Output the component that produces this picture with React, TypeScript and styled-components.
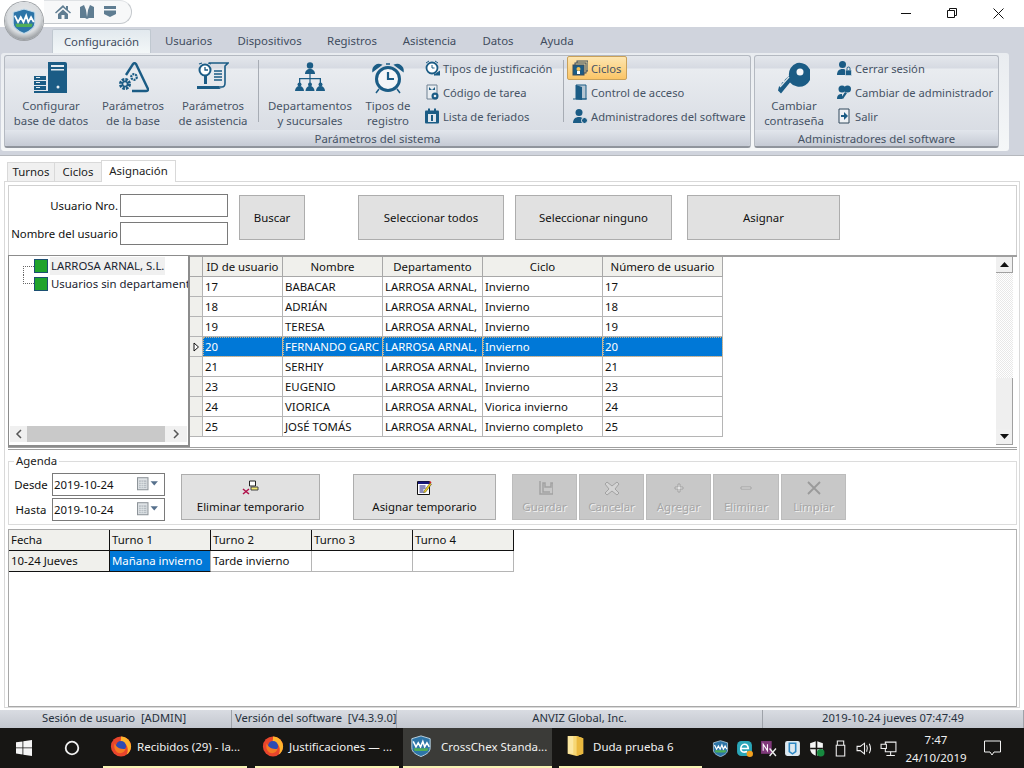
import React from 'react'
import styled, { createGlobalStyle } from 'styled-components'

const GlobalStyle = createGlobalStyle`
  html, body { margin: 0; padding: 0; background: #fff; }
  body { font-family: "Noto Sans", "Open Sans", sans-serif; font-size: 11.4px; color: #111; overflow: hidden; }
  * { box-sizing: border-box; }
`

const INK = '#1b5c85'

const Window = styled.div`
  width: 1024px;
  height: 768px;
  display: flex;
  flex-direction: column;
  position: relative;
  overflow: hidden;
`

/* title bar */
const TitleBar = styled.div`
  height: 27px;
  display: flex;
  background: #fff;
`
const QuickAccess = styled.div`
  margin-left: 44px;
  width: 88px;
  height: 24px;
  border: 1px solid #c4c8cc;
  border-left: none;
  border-top-color: #dfe2e5;
  border-radius: 0 12px 12px 0;
  display: flex;
  align-items: center;
  gap: 8px;
  padding: 0 0 0 11px;
  background: #f7f8f9;
`
const WindowControls = styled.div`
  margin-left: auto;
  display: flex;
  padding-right: 3px;
  color: #111;
`
const WindowButton = styled.div`
  width: 46px;
  height: 26px;
  display: flex;
  align-items: center;
  justify-content: center;
`
const LogoBadge = styled.div`
  position: absolute;
  left: 5px;
  top: 2px;
  width: 38px;
  height: 38px;
  border-radius: 50%;
  background: radial-gradient(circle at 50% 40%, #e8eaec 0, #d9dcdf 55%, #8b8f93 80%, #55585b 100%);
  box-shadow: 0 0 0 1px #9da1a5;
  display: flex;
  align-items: center;
  justify-content: center;
  z-index: 2;
`

/* ribbon */
const TabStrip = styled.div`
  height: 26px;
  background: #d0d4dd;
  display: flex;
  padding-left: 52px;
`
const RibbonTab = styled.div<{ $active?: boolean; $w: number }>`
  width: ${p => p.$w}px;
  height: ${p => (p.$active ? 24 : 23)}px;
  margin-top: 2px;
  display: flex;
  align-items: center;
  justify-content: center;
  color: #3f4c5e;
  border-radius: 2px 2px 0 0;
  ${p => p.$active && `
    background: linear-gradient(#e2e9ee, #f3f7f8);
    border: 1px solid #c0c8d0;
    border-bottom: none;
  `}
`
const RibbonBand = styled.div`
  height: 102px;
  background: #d0d4dd;
  flex: none;
`
const RibbonBody = styled.div`
  width: 1008px;
  height: 98px;
  margin-left: 1px;
  background: linear-gradient(#e9ecf0, #f5f7f8);
  border-radius: 3px;
  padding: 2px 3px 0;
  display: flex;
  gap: 3px;
`
const RibbonGroup = styled.div<{ $w: number }>`
  width: ${p => p.$w}px;
  height: 93px;
  border: 1px solid #b4b9c1;
  border-bottom: 2px solid #8f949c;
  border-radius: 3px;
  display: flex;
  flex-direction: column;
  background: linear-gradient(#e4e7ec 0, #d6dae2 12px, #e9ecf0 13px, #d9dde4 74px);
`
const GroupContent = styled.div`
  height: 74px;
  display: flex;
`
const GroupCaption = styled.div`
  flex: 1;
  background: linear-gradient(#e2e6ec, #c5cad4);
  display: flex;
  align-items: center;
  justify-content: center;
  color: #465365;
  border-radius: 0 0 3px 3px;
`
const LargeButton = styled.div<{ $w: number }>`
  width: ${p => p.$w}px;
  display: flex;
  flex-direction: column;
  align-items: center;
  color: #465365;
  line-height: 15px;
  text-align: center;
  padding-top: 6px;
  flex: none;
`
const LargeIcon = styled.div`
  height: 36px;
  display: flex;
  align-items: flex-start;
  justify-content: center;
`
const RibbonDivider = styled.div<{ $ml: number; $mr: number }>`
  width: 1px;
  height: 62px;
  margin: 4px ${p => p.$mr}px 0 ${p => p.$ml}px;
  background: #a7acb4;
  flex: none;
`
const SmallColumn = styled.div<{ $w: number; $pad: number }>`
  width: ${p => p.$w}px;
  flex: none;
  display: flex;
  flex-direction: column;
  padding: 0 0 0 ${p => p.$pad}px;
`
const SmallButton = styled.div<{ $on?: boolean }>`
  height: 24px;
  display: flex;
  align-items: center;
  gap: 3px;
  color: #465365;
  font-size: 11.2px;
  white-space: nowrap;
  border-radius: 2px;
  ${p => p.$on && `
    background: linear-gradient(#fde6b0, #fbc566);
    border: 1px solid #c9a15a;
    margin-left: -5px;
    padding-left: 4px;
    width: 60px;
  `}
`

/* main area */
const Main = styled.div`
  flex: 1;
  min-height: 0;
  background: #fff;
  border-top: 1px solid #b5b8bd;
  padding: 4px 4px 2px;
  display: flex;
  flex-direction: column;
`
const PageTabs = styled.div`
  display: flex;
  height: 22px;
  align-items: flex-end;
  padding-left: 4px;
  flex: none;
  position: relative;
  z-index: 1;
  margin-bottom: -1px;
`
const PageTab = styled.div<{ $active?: boolean; $w: number }>`
  width: ${p => p.$w}px;
  height: ${p => (p.$active ? 22 : 20)}px;
  padding-bottom: ${p => (p.$active ? 3 : 1)}px;
  background: ${p => (p.$active ? '#fff' : '#f0f0f0')};
  border: 1px solid #d9d9d9;
  border-bottom: ${p => (p.$active ? 'none' : '1px solid #d9d9d9')};
  margin-left: -1px;
  display: flex;
  align-items: center;
  justify-content: center;
  color: #222;
`
const PagePanel = styled.div`
  flex: 1;
  min-height: 0;
  border: 1px solid #d9d9d9;
  padding: 3px 2px 0 3px;
  display: flex;
  flex-direction: column;
`
const FilterBar = styled.div`
  height: 70px;
  flex: none;
  border: 1px solid #d0d0d0;
  border-bottom: none;
  display: flex;
  padding-top: 8px;
`
const FilterFields = styled.div`
  width: 219px;
  display: grid;
  grid-template-columns: 109px 108px;
  grid-auto-rows: 23px;
  row-gap: 5px;
  column-gap: 2px;
  flex: none;
`
const FieldLabel = styled.label`
  text-align: right;
  align-self: center;
  white-space: nowrap;
`
const TextField = styled.div`
  border: 1px solid #7a7a7a;
  background: #fff;
`
const ActionButton = styled.div<{ $w: number; $ml: number }>`
  width: ${p => p.$w}px;
  margin: 1px 0 0 ${p => p.$ml}px;
  height: 45px;
  background: #e1e1e1;
  border: 1px solid #adadad;
  display: flex;
  align-items: center;
  justify-content: center;
  flex: none;
`
const SplitRow = styled.div`
  height: 195px;
  flex: none;
  display: flex;
  border-bottom: 3px double #a0a0a0;
`
const TreePanel = styled.div`
  width: 182px;
  height: 192px;
  border: 1px solid #8c8c8c;
  border-width: 1px 2px 2px 1px;
  display: flex;
  flex-direction: column;
  flex: none;
  background: #fff;
`
const TreeList = styled.div`
  flex: 1;
  overflow: hidden;
  padding: 1px 0 0 14px;
`
const TreeRow = styled.div`
  height: 18px;
  display: flex;
  align-items: center;
  white-space: nowrap;
`
const TreeLine = styled.span<{ $last?: boolean }>`
  width: 11px;
  height: 9px;
  flex: none;
  border-left: 1px dotted #666;
  ${p => p.$last
    ? 'border-bottom: 1px dotted #666; margin-top: -9px;'
    : 'border-top: 1px dotted #666; margin-top: 9px;'}
`
const TreeSquare = styled.span`
  width: 14px;
  height: 14px;
  background: #1fa32c;
  border: 1px solid #1b4f72;
  flex: none;
  margin-right: 2px;
`
const TreeLabel = styled.span<{ $on?: boolean }>`
  padding: 0 1px;
  line-height: 18px;
  background: ${p => (p.$on ? '#f0f0f0' : 'transparent')};
  color: #1a2430;
`
const HScroll = styled.div`
  height: 16px;
  margin: 0 1px 3px;
  display: flex;
  align-items: center;
  background: #f0f0f0;
  color: #555;
`
const HThumb = styled.div`
  flex: 1;
  height: 16px;
  background: #c9c9c9;
`
const ScrollArrow = styled.div<{ $w: number }>`
  width: ${p => p.$w}px;
  display: flex;
  align-items: center;
  justify-content: center;
`
const GridArea = styled.div`
  flex: 1;
  border-top: 2px solid #9f9f9f;
  display: flex;
  background: #fff;
  height: 192px;
  padding-right: 4px;
`
const GridBody = styled.div`
  flex: 1;
`
const GridLine = styled.div`
  display: grid;
  grid-template-columns: 13px 80px 100px 100px 120px 120px;
  width: 533px;
  height: 20px;
`
const HeadCell = styled.div`
  background: #f0f0ec;
  border-right: 1px solid #a8a8a8;
  border-bottom: 1px solid #a8a8a8;
  display: flex;
  align-items: center;
  justify-content: center;
  white-space: nowrap;
  overflow: hidden;
`
const RowMark = styled.div`
  background: #f0f0ec;
  border-right: 1px solid #b5b5b5;
  border-bottom: 1px solid #b5b5b5;
  display: flex;
  align-items: center;
  justify-content: center;
`
const DataCell = styled.div<{ $on?: boolean }>`
  background: ${p => (p.$on ? '#0078d7' : '#fff')};
  color: ${p => (p.$on ? '#fff' : '#111')};
  border-right: 1px solid #b5b5b5;
  border-bottom: 1px solid #b5b5b5;
  padding-left: 2px;
  line-height: 19px;
  white-space: nowrap;
  overflow: hidden;
  ${p => p.$on && 'outline: 1px dotted #c9b48a; outline-offset: -1px;'}
`
const VScroll = styled.div`
  width: 17px;
  height: 188px;
  display: flex;
  flex-direction: column;
  flex: none;
`
const VArrow = styled.div`
  height: 16px;
  flex: none;
  display: flex;
  align-items: center;
  justify-content: center;
  background: #f0f0f0;
  border-right: 1px solid #a0a0a0;
  border-bottom: 1px solid #a0a0a0;
`
const VTrack = styled.div`
  flex: 1;
  background: repeating-conic-gradient(#e8e8e8 0 25%, #fff 0 50%) 0 0 / 2px 2px;
`
const VThumb = styled.div`
  height: 51px;
  flex: none;
  background: #efefef;
  border-right: 1px solid #a0a0a0;
`
const AgendaBox = styled.fieldset`
  margin: 4px 0 0;
  padding: 0 0 0 5px;
  height: 71px;
  flex: none;
  border: 1px solid #dcdcdc;
  display: flex;
  min-inline-size: 0;
`
const AgendaLegend = styled.legend`
  padding: 0 2px;
  line-height: 14px;
  color: #222;
`
const AgendaRow = styled.div`
  display: flex;
  margin-top: 5px;
`
const DateFields = styled.div`
  display: grid;
  grid-template-columns: 38px 113px;
  grid-auto-rows: 23px;
  row-gap: 2px;
  flex: none;
  width: 151px;
`
const DateLabel = styled.span`
  align-self: center;
  text-align: center;
  padding-right: 4px;
`
const DateInput = styled.div`
  border: 1px solid #7a7a7a;
  display: flex;
  align-items: center;
  padding: 0 4px 0 1px;
  justify-content: space-between;
`
const CommandButton = styled.div<{ $w: number; $ml?: number; $off?: boolean }>`
  width: ${p => p.$w}px;
  margin: 1px 0 0 ${p => p.$ml || 0}px;
  height: 46px;
  flex: none;
  background: ${p => (p.$off ? '#c8c8c8' : '#e1e1e1')};
  border: 1px solid ${p => (p.$off ? '#bcbcbc' : '#adadad')};
  color: ${p => (p.$off ? '#a6a6a6' : '#111')};
  ${p => p.$off && 'text-shadow: 1px 1px 0 #f2f2f2;'}
  display: flex;
  flex-direction: column;
  align-items: center;
  padding-top: 5px;
  justify-content: space-between;
  padding-bottom: 5px;
  white-space: nowrap;
`
const ScheduleGrid = styled.div`
  flex: 1;
  min-height: 0;
  margin-top: 4px;
  border: 1px solid #a8a8a8;
  border-right-color: #b5b5b5;
`
const ScheduleLine = styled.div`
  display: grid;
  grid-template-columns: repeat(5, 101px);
  width: 505px;
`
const ScheduleHead = styled.div`
  height: 21px;
  background: #f0f0ec;
  border-right: 1px solid #111;
  border-bottom: 1px solid #111;
  padding-left: 2px;
  line-height: 20px;
`
const ScheduleCell = styled.div<{ $kind?: 'date' | 'on' }>`
  height: 21px;
  padding-left: 2px;
  line-height: 20px;
  white-space: nowrap;
  overflow: hidden;
  background: ${p => (p.$kind === 'date' ? '#f0f0ec' : p.$kind === 'on' ? '#0078d7' : '#fff')};
  color: ${p => (p.$kind === 'on' ? '#fff' : '#111')};
  border-bottom: 1px solid ${p => (p.$kind ? '#111' : '#b5b5b5')};
  border-right: 1px solid ${p => (p.$kind === 'date' ? '#111' : '#b5b5b5')};
`

/* status bar */
const StatusBar = styled.div`
  height: 18px;
  flex: none;
  display: flex;
  background: linear-gradient(#d9dce2, #c3c7cf);
  color: #26303c;
  font-size: 11.2px;
`
const StatusCell = styled.div<{ $w: number; $pad?: number; $center?: boolean }>`
  width: ${p => p.$w}px;
  flex: none;
  border-right: 1px solid #9ea2a9;
  line-height: 16px;
  white-space: pre;
  overflow: hidden;
  padding-left: ${p => p.$pad || 0}px;
  text-align: ${p => (p.$center ? 'center' : 'left')};
`

/* taskbar */
const Taskbar = styled.div`
  height: 40px;
  flex: none;
  background: #171614;
  display: flex;
  align-items: stretch;
  color: #f1f1f1;
  font-size: 11.5px;
  padding-right: 13px;
`
const TaskSlot = styled.div`
  width: 48px;
  flex: none;
  display: flex;
  align-items: center;
  justify-content: center;
`
const TaskItem = styled.div<{ $w: number; $ml: number; $gap?: number; $active?: boolean }>`
  width: ${p => p.$w}px;
  margin-left: ${p => p.$ml}px;
  flex: none;
  display: flex;
  align-items: center;
  gap: ${p => p.$gap || 5}px;
  padding: 0 0 2px 7px;
  white-space: nowrap;
  overflow: hidden;
  background: ${p => (p.$active ? '#3b3b38' : 'transparent')};
  border-bottom: 2px solid #f6f3b4;
`
const TrayIcons = styled.div`
  margin-left: auto;
  display: flex;
  align-items: center;
  gap: 7px;
`
const Clock = styled.div`
  width: 74px;
  margin-left: -5px;
  text-align: center;
  line-height: 18px;
  flex: none;
  padding-top: 1px;
`
const NotifyButton = styled.div`
  width: 38px;
  flex: none;
  display: flex;
  align-items: center;
  justify-content: center;
`

/* drawings */
const Shield = ({ size = 24 }: { size?: number }) => (
  <svg width={size} height={size} viewBox="0 0 24 24">
    <path d="M12 1 22 4v10c0 5-5 7.500-10 9.500C7 21.500 2 19 2 14V4z" fill="#2d75a8" stroke="#c3dbea" strokeWidth="1" />
    <path d="M3.500 7 6.500 13 9 8.500 11.500 13 14 7l2 6 2.500-4.500L21 13" fill="none" stroke="#fff" strokeWidth="1.700" />
    <path d="M4 14.500h16l-1 3H5z" fill="#4fae57" />
  </svg>
)
const IconHome = () => (
  <svg width="16" height="16" viewBox="0 0 16 16"><path d="M8 1 0 8.500l1 1L8 3.500l7 6 1-1L13 6V2h-2v2.200zM3 10v5h3.500v-4h3v4H13v-5L8 5.500z" fill="#5f7d92" /></svg>
)
const IconUsers = () => (
  <svg width="16" height="16" viewBox="0 0 16 16"><path d="M1 3 5 1l2 5 1 7 1-7 2-5 4 2v11H10l-2 1-2-1H1z" fill="#5f7d92" /><path d="M6.800 3h2.400L8 8z" fill="#f7f8f9" /></svg>
)
const IconShield = () => (
  <svg width="14" height="14" viewBox="0 0 14 14"><path d="M1 1h12v3H1zM1 5.500h12V9L7 12 1 9z" fill="#5f7d92" /></svg>
)
const IconServer = () => (
  <svg width="34" height="32" viewBox="0 0 34 32">
    <path d="M14 0h17a2 2 0 0 1 2 2v28H14z" fill={INK} />
    <path d="M17 3h13v2H17zM17 7h13v1.500H17z" fill="#e6edf2" />
    <circle cx="24" cy="25" r="1.500" fill="#e6edf2" />
    <path d="M0 14h12v4H0zM0 19h12v4H0zM0 24h12v4H0z" fill={INK} />
    <path d="M2 15.500h4M2 20.500h4M2 25.500h4" stroke="#e6edf2" />
    <path d="M0 29h33v2H0z" fill={INK} />
  </svg>
)
const IconBaseParams = () => (
  <svg width="32" height="32" viewBox="0 0 32 32">
    <path d="M9 13 16 2c1-1 2-1 3 0l12 25c.5 1-.5 2-2 2H15" fill="none" stroke={INK} strokeWidth="2.400" />
    <circle cx="8" cy="22" r="4.500" fill="none" stroke={INK} strokeWidth="3" strokeDasharray="2.500 1" />
    <circle cx="8" cy="22" r="2.500" fill="none" stroke={INK} strokeWidth="1.500" />
    <circle cx="17" cy="15" r="2.800" fill="none" stroke={INK} strokeWidth="2.200" strokeDasharray="2 .8" />
  </svg>
)
const IconAttendance = () => (
  <svg width="32" height="32" viewBox="0 0 32 32">
    <path d="M12 1h19l-3 3v17c0 3-1 4-3 4H12" fill="none" stroke={INK} strokeWidth="1.600" />
    <path d="M17 9h8M17 12h8M17 15h8M17 18h8" stroke={INK} strokeWidth="1.300" />
    <circle cx="8" cy="8" r="5.500" fill="#fff" stroke={INK} strokeWidth="2" />
    <path d="M8 5v3h3M2 2l3-1M14 2l-3-1" stroke={INK} strokeWidth="1.300" fill="none" />
    <path d="M7 13h3v9H7z" fill={INK} />
    <path d="M0 24h22c0 2 1 3 3 3H0z" fill={INK} />
  </svg>
)
const IconOrg = () => (
  <svg width="30" height="30" viewBox="0 0 30 30" fill={INK}>
    <circle cx="15" cy="3.500" r="3.200" />
    <path d="M10 12c0-3 2-5 5-5s5 2 5 5z" />
    <path d="M14.400 12h1.200v5h-1.200zM4 16h22v1.300H4zM4 16h1.300v5H4zM14.400 16h1.200v5h-1.200zM24.700 16H26v5h-1.300z" />
    <circle cx="4.500" cy="22.500" r="2" /><path d="M0 29c0-3 2-5 4.500-5S9 26 9 29z" />
    <circle cx="15" cy="22.500" r="2" /><path d="M10.500 29c0-3 2-5 4.500-5s4.500 2 4.500 5z" />
    <circle cx="25.500" cy="22.500" r="2" /><path d="M21 29c0-3 2-5 4.500-5s4.500 2 4.500 5z" />
  </svg>
)
const IconAlarm = () => (
  <svg width="32" height="32" viewBox="0 0 32 32">
    <circle cx="16" cy="17" r="11.500" fill="#f4f6f8" stroke={INK} strokeWidth="3" />
    <path d="M16 10v7h6" fill="none" stroke={INK} strokeWidth="2.200" />
    <path d="M1 9a6 6 0 0 1 8-6zM31 9a6 6 0 0 0-8-6zM7 27l-3 4M25 27l3 4M14 2h4" fill={INK} stroke={INK} strokeWidth="1.500" />
  </svg>
)
const IconKey = () => (
  <svg width="32" height="34" viewBox="0 0 32 34">
    <path d="M19 1a12 12 0 1 1-7 19.500l-9 11-3-3 1-4 2-1 1-3 2-.5 1-2.500L11 14A12 12 0 0 1 19 1z" fill={INK} />
    <circle cx="22" cy="10" r="3.500" fill="#f4f6f8" />
    <path d="M2 25l9-10" stroke="#dfe6ea" strokeWidth="1.300" />
  </svg>
)
const MiniIcon = ({ kind }: { kind: string }) => {
  const body: Record<string, React.ReactNode> = {
    justify: <><circle cx="8" cy="8" r="5.500" fill="#fff" stroke={INK} strokeWidth="1.800" /><path d="M8 5v3h2.500" stroke={INK} fill="none" /><path d="M2 3l3-2M14 3l-3-2M10 15h6v-4z" stroke={INK} fill={INK} /></>,
    task: <><path d="M3 1h10v14H3z" fill="#e9edf1" stroke="#6f8192" /><path d="M5 3l3 3 3-3v3H5z" fill={INK} /><circle cx="11" cy="12" r="3.500" fill={INK} /><circle cx="11" cy="12" r="1.300" fill="#e9edf1" /></>,
    holiday: <><rect x="1" y="2.500" width="14" height="13" rx="1" fill={INK} /><path d="M4 .5h2v4H4zM10 .5h2v4h-2z" fill={INK} /><rect x="4" y="6" width="8" height="8" fill="#dfe7ee" /><path d="M8 7v6" stroke={INK} strokeWidth="2" /></>,
    cycles: <><rect x="5" y="1" width="11" height="10" fill="#e8d49c" stroke="#3c4c5c" /><rect x="3" y="3" width="11" height="10" fill="#e8d49c" stroke="#3c4c5c" /><rect x="1" y="5" width="11" height="10" fill={INK} stroke="#3c4c5c" /><circle cx="6.500" cy="9" r="2" fill="#f3c25a" /><path d="M5 11h3v3H5z" fill="#fff" /></>,
    door: <><path d="M4 1h10v14H4z" fill="#b4c5d2" stroke={INK} /><path d="M4 1l6 2v13l-6-1z" fill={INK} /><path d="M1 15h14" stroke={INK} /></>,
    admin: <><circle cx="7" cy="4.500" r="3.500" fill={INK} /><path d="M1 15c0-4 2.500-6 6-6 2 0 3 .5 4 1.500V15z" fill={INK} /><circle cx="12.500" cy="12.500" r="3" fill={INK} stroke="#e6eaef" /></>,
    logout: <><circle cx="6.500" cy="4.500" r="3.500" fill={INK} /><path d="M1 15c0-4 2-6 5.500-6 1.500 0 2.500.3 3 1v5z" fill={INK} /><rect x="9.500" y="10" width="6" height="5.500" fill={INK} stroke="#e6eaef" strokeWidth=".6" /><path d="M11 10V8.500a1.500 1.500 0 0 1 3 0V10" fill="none" stroke={INK} /></>,
    change: <><circle cx="6" cy="5" r="3.500" fill={INK} /><path d="M1 15c0-4 2-5 5-5v5z" fill={INK} /><circle cx="11.500" cy="5" r="3.500" fill={INK} /><path d="M9 8l-4 6 2 1 4-6z" fill={INK} /></>,
    exit: <><path d="M3 1h10v14H3z" fill="#eef1f4" stroke="#30485c" /><path d="M8 4v3H5v2h3v3l4-4z" fill={INK} /></>,
  }
  return <svg width="16" height="16" viewBox="0 0 16 16" style={{ flex: 'none' }}>{body[kind]}</svg>
}
const CalendarIcon = () => (
  <svg width="23" height="15" viewBox="0 0 22 14">
    <rect x="0.500" y="0.500" width="10" height="11.500" fill="#dfe3e6" stroke="#8d9499" />
    <path d="M2 3h7v7.500H2z" fill="#b5bcc2" />
    <path d="M2 5h7M2 7h7M2 9h7M4 3v7.500M6 3v7.500" stroke="#e8ebed" strokeWidth=".6" />
    <path d="M13 4h7l-3.500 4z" fill="#56708c" />
  </svg>
)
const ScheduleRemoveIcon = () => (
  <svg width="17" height="15" viewBox="0 0 17 15">
    <path d="M7.500 1h6v5h-6z" fill="#fff" stroke="#222" />
    <path d="M9 7h7v3H9z" fill="#f4ea71" stroke="#444" />
    <path d="M1 9l6 5M7 9l-6 5" stroke="#b0104a" strokeWidth="1.500" />
  </svg>
)
const ScheduleEditIcon = () => (
  <svg width="15" height="15" viewBox="0 0 15 15">
    <path d="M.5 1.500h12v13H.5z" fill="#fff" stroke="#111" />
    <path d="M1 1.500h12v2.500H1z" fill="#16167a" />
    <path d="M2.500 6h6M2.500 8h6M2.500 10h4M2.500 12h4" stroke="#16167a" />
    <path d="M7 11l6-8 1.500 1.200-6 8-2 .5z" fill="#f3d21c" stroke="#333" strokeWidth=".5" />
    <path d="M13 1l1.500 1.200-.8 1.300-1.500-1.200z" fill="#d02020" />
  </svg>
)
const GhostIcon = ({ kind }: { kind: string }) => {
  const d: Record<string, React.ReactNode> = {
    save: <path d="M3 1v13h13V3h-2v4H8V3H6v9h7" fill="none" stroke="#a2a2a2" strokeWidth="1.500" />,
    cancel: <path d="M3 2l5 4 5-4 2 2-4 5 4 4-2 2-5-4-5 4-2-2 4-4-4-5z" fill="#d4d4d4" stroke="#a2a2a2" />,
    add: <path d="M7 4h2v3h3v2H9v3H7V9H4V7h3z" fill="#e6e6e6" stroke="#a2a2a2" />,
    remove: <path d="M3 7h10v2H3z" fill="#e6e6e6" stroke="#a2a2a2" />,
    clear: <path d="M2 2l12 12M14 2 2 14" stroke="#9a9a9a" strokeWidth="1.800" />,
  }
  return <svg width="16" height="16" viewBox="0 0 16 16">{d[kind]}</svg>
}
const Firefox = () => (
  <svg width="22" height="22" viewBox="0 0 24 24">
    <circle cx="12" cy="12.500" r="11" fill="#e8452c" />
    <path d="M12 1.500c6 0 11 5 11 11 0 4-2 7-5 9 3-5 1-11-3-13-1 1-3 1-4 0 1-2 1-5 1-7z" fill="#ffb32c" />
    <circle cx="12" cy="12" r="5.500" fill="#2c4bb4" />
    <path d="M5 9c2 4 5 7 12 6-1 4-5 6-9 4-3-2-4-6-3-10z" fill="#f47a22" />
  </svg>
)
const Folder = () => (
  <svg width="19" height="22" viewBox="0 0 16 20">
    <path d="M1 1h8l6 2v14l-6 2-8-2z" fill="#f7d774" />
    <path d="M1 1h5v16H1z" fill="#fbe7a1" />
    <path d="M9 1l6 2v14l-6 2z" fill="#eab93f" />
  </svg>
)
const Tray = ({ kind }: { kind: string }) => {
  const b: Record<string, React.ReactNode> = {
    onenote: <><rect x="1" y="1" width="10" height="12" fill="#80397b" /><path d="M3 10V4l4 6V4" stroke="#fff" fill="none" /><path d="M9 8l6 7M15 8l-6 7" stroke="#eee" strokeWidth="1.300" /></>,
    edge: <><rect x="1" y="1" width="14" height="14" rx="4" fill="#2aa6b8" /><path d="M4.500 8h7c0-2.500-1.500-4-3.500-4S4.500 6 4.500 8.500 6.500 12 10.500 11" fill="none" stroke="#fff" strokeWidth="1.600" /><circle cx="13" cy="13" r="3" fill="#f2a11f" /></>,
    phone: <><rect x="1" y="1" width="14" height="14" rx="2" fill="#dde9f0" /><path d="M5 3h6v8l-3 2-3-2z" fill="none" stroke="#2d88c4" strokeWidth="1.500" /></>,
    defender: <><path d="M8 1l6 2v5c0 4-3 6-6 7-3-1-6-3-6-7V3z" fill="#f5f5f5" /><path d="M8 1v14M2 8h12" stroke="#171614" strokeWidth="1.500" /><circle cx="12" cy="12" r="3.500" fill="#178a3f" /></>,
    usb: <><path d="M5 1h6v4H5zM4 5h8v10H4z" fill="none" stroke="#f1f1f1" /></>,
    sound: <><path d="M1 6h3l4-3v10l-4-3H1z" fill="none" stroke="#f1f1f1" /><path d="M10 5c1 2 1 4 0 6M12.500 3.500c1.500 3 1.500 6 0 9" fill="none" stroke="#f1f1f1" /></>,
    net: <><path d="M5 2h10v9H5z" fill="none" stroke="#f1f1f1" /><path d="M1 4h5v4H1zM10 11v3M6 14.500h8" fill="#171614" stroke="#f1f1f1" /></>,
  }
  return <svg width="17" height="17" viewBox="0 0 16 16">{b[kind]}</svg>
}

const users = [
  ['17', 'BABACAR', 'Invierno'],
  ['18', 'ADRIÁN', 'Invierno'],
  ['19', 'TERESA', 'Invierno'],
  ['20', 'FERNANDO GARC', 'Invierno'],
  ['21', 'SERHIY', 'Invierno'],
  ['23', 'EUGENIO', 'Invierno'],
  ['24', 'VIORICA', 'Viorica invierno'],
  ['25', 'JOSÉ TOMÁS', 'Invierno completo'],
]

export default function App() {
  return (
    <Window>
      <GlobalStyle />
      <LogoBadge><Shield size={26} /></LogoBadge>
      <TitleBar>
        <QuickAccess><IconHome /><IconUsers /><IconShield /></QuickAccess>
        <WindowControls>
          <WindowButton><svg width="10" height="10" viewBox="0 0 10 10"><path d="M0 5.500h10" stroke="#111" /></svg></WindowButton>
          <WindowButton><svg width="10" height="10" viewBox="0 0 10 10"><path d="M.5 2.500h7v7h-7zM2.500 2.500v-2h7v7h-2" fill="none" stroke="#111" /></svg></WindowButton>
          <WindowButton><svg width="11" height="11" viewBox="0 0 11 11"><path d="M.5.500l10 10M10.500.500l-10 10" stroke="#111" /></svg></WindowButton>
        </WindowControls>
      </TitleBar>

      <TabStrip>
        <RibbonTab $active $w={99}>Configuración</RibbonTab>
        <RibbonTab $w={75}>Usuarios</RibbonTab>
        <RibbonTab $w={87}>Dispositivos</RibbonTab>
        <RibbonTab $w={78}>Registros</RibbonTab>
        <RibbonTab $w={77}>Asistencia</RibbonTab>
        <RibbonTab $w={60}>Datos</RibbonTab>
        <RibbonTab $w={58}>Ayuda</RibbonTab>
      </TabStrip>
      <RibbonBand>
        <RibbonBody>
          <RibbonGroup $w={747}>
            <GroupContent>
              <LargeButton $w={92}><LargeIcon><IconServer /></LargeIcon>Configurar<br />base de datos</LargeButton>
              <LargeButton $w={72}><LargeIcon><IconBaseParams /></LargeIcon>Parámetros<br />de la base</LargeButton>
              <LargeButton $w={88}><LargeIcon><IconAttendance /></LargeIcon>Parámetros<br />de asistencia</LargeButton>
              <RibbonDivider $ml={1} $mr={8} />
              <LargeButton $w={86}><LargeIcon><IconOrg /></LargeIcon>Departamentos<br />y sucursales</LargeButton>
              <LargeButton $w={70}><LargeIcon><IconAlarm /></LargeIcon>Tipos de<br />registro</LargeButton>
              <SmallColumn $w={139} $pad={1}>
                <SmallButton><MiniIcon kind="justify" />Tipos de justificación</SmallButton>
                <SmallButton><MiniIcon kind="task" />Código de tarea</SmallButton>
                <SmallButton><MiniIcon kind="holiday" />Lista de feriados</SmallButton>
              </SmallColumn>
              <RibbonDivider $ml={1} $mr={3} />
              <SmallColumn $w={178} $pad={5}>
                <SmallButton $on><MiniIcon kind="cycles" />Ciclos</SmallButton>
                <SmallButton><MiniIcon kind="door" />Control de acceso</SmallButton>
                <SmallButton><MiniIcon kind="admin" />Administradores del software</SmallButton>
              </SmallColumn>
            </GroupContent>
            <GroupCaption>Parámetros del sistema</GroupCaption>
          </RibbonGroup>
          <RibbonGroup $w={245}>
            <GroupContent>
              <LargeButton $w={78}><LargeIcon><IconKey /></LargeIcon>Cambiar<br />contraseña</LargeButton>
              <SmallColumn $w={165} $pad={3}>
                <SmallButton><MiniIcon kind="logout" />Cerrar sesión</SmallButton>
                <SmallButton><MiniIcon kind="change" />Cambiar de administrador</SmallButton>
                <SmallButton><MiniIcon kind="exit" />Salir</SmallButton>
              </SmallColumn>
            </GroupContent>
            <GroupCaption>Administradores del software</GroupCaption>
          </RibbonGroup>
        </RibbonBody>
      </RibbonBand>

      <Main>
        <PageTabs>
          <PageTab $w={48}>Turnos</PageTab>
          <PageTab $w={48}>Ciclos</PageTab>
          <PageTab $active $w={75}>Asignación</PageTab>
        </PageTabs>
        <PagePanel>
          <FilterBar>
            <FilterFields>
              <FieldLabel>Usuario Nro.</FieldLabel><TextField />
              <FieldLabel>Nombre del usuario</FieldLabel><TextField />
            </FilterFields>
            <ActionButton $w={66} $ml={11}>Buscar</ActionButton>
            <ActionButton $w={146} $ml={53}>Seleccionar todos</ActionButton>
            <ActionButton $w={157} $ml={11}>Seleccionar ninguno</ActionButton>
            <ActionButton $w={153} $ml={15}>Asignar</ActionButton>
          </FilterBar>
          <SplitRow>
            <TreePanel>
              <TreeList>
                <TreeRow><TreeLine /><TreeSquare /><TreeLabel $on>LARROSA ARNAL, S.L.</TreeLabel></TreeRow>
                <TreeRow><TreeLine $last /><TreeSquare /><TreeLabel>Usuarios sin departamento</TreeLabel></TreeRow>
              </TreeList>
              <HScroll>
                <ScrollArrow $w={17}><svg width="8" height="10" viewBox="0 0 8 10"><path d="M6 1 2 5l4 4" fill="none" stroke="#555" strokeWidth="1.500" /></svg></ScrollArrow>
                <HThumb />
                <ScrollArrow $w={22}><svg width="8" height="10" viewBox="0 0 8 10"><path d="M2 1l4 4-4 4" fill="none" stroke="#555" strokeWidth="1.500" /></svg></ScrollArrow>
              </HScroll>
            </TreePanel>
            <GridArea>
              <GridBody>
                <GridLine>
                  <HeadCell />
                  <HeadCell>ID de usuario</HeadCell>
                  <HeadCell>Nombre</HeadCell>
                  <HeadCell>Departamento</HeadCell>
                  <HeadCell>Ciclo</HeadCell>
                  <HeadCell>Número de usuario</HeadCell>
                </GridLine>
                {users.map(([id, name, cycle]) => {
                  const on = id === '20'
                  return (
                    <GridLine key={id}>
                      <RowMark>
                        {on && <svg width="7" height="10" viewBox="0 0 7 10"><path d="M1 1l4.500 4L1 9z" fill="#fff" stroke="#111" /></svg>}
                      </RowMark>
                      <DataCell $on={on}>{id}</DataCell>
                      <DataCell $on={on}>{name}</DataCell>
                      <DataCell $on={on}>LARROSA ARNAL,</DataCell>
                      <DataCell $on={on}>{cycle}</DataCell>
                      <DataCell $on={on}>{id}</DataCell>
                    </GridLine>
                  )
                })}
              </GridBody>
              <VScroll>
                <VArrow><svg width="9" height="5" viewBox="0 0 9 5"><path d="M4.500 0 9 5H0z" fill="#111" /></svg></VArrow>
                <VTrack />
                <VThumb />
                <VArrow><svg width="9" height="5" viewBox="0 0 9 5"><path d="M0 0h9L4.500 5z" fill="#111" /></svg></VArrow>
              </VScroll>
            </GridArea>
          </SplitRow>
          <AgendaBox>
            <AgendaLegend>Agenda</AgendaLegend>
            <AgendaRow>
              <DateFields>
                <DateLabel>Desde</DateLabel>
                <DateInput>2019-10-24<CalendarIcon /></DateInput>
                <DateLabel>Hasta</DateLabel>
                <DateInput>2019-10-24<CalendarIcon /></DateInput>
              </DateFields>
              <CommandButton $w={139} $ml={16}><ScheduleRemoveIcon />Eliminar temporario</CommandButton>
              <CommandButton $w={143} $ml={33}><ScheduleEditIcon />Asignar temporario</CommandButton>
              <CommandButton $off $w={65} $ml={16}><GhostIcon kind="save" />Guardar</CommandButton>
              <CommandButton $off $w={65} $ml={2}><GhostIcon kind="cancel" />Cancelar</CommandButton>
              <CommandButton $off $w={65} $ml={2}><GhostIcon kind="add" />Agregar</CommandButton>
              <CommandButton $off $w={66} $ml={2}><GhostIcon kind="remove" />Eliminar</CommandButton>
              <CommandButton $off $w={65} $ml={2}><GhostIcon kind="clear" />Limpiar</CommandButton>
            </AgendaRow>
          </AgendaBox>
          <ScheduleGrid>
            <ScheduleLine>
              <ScheduleHead>Fecha</ScheduleHead>
              <ScheduleHead>Turno 1</ScheduleHead>
              <ScheduleHead>Turno 2</ScheduleHead>
              <ScheduleHead>Turno 3</ScheduleHead>
              <ScheduleHead>Turno 4</ScheduleHead>
            </ScheduleLine>
            <ScheduleLine>
              <ScheduleCell $kind="date">10-24 Jueves</ScheduleCell>
              <ScheduleCell $kind="on">Mañana invierno</ScheduleCell>
              <ScheduleCell>Tarde invierno</ScheduleCell>
              <ScheduleCell />
              <ScheduleCell />
            </ScheduleLine>
          </ScheduleGrid>
        </PagePanel>
      </Main>

      <StatusBar>
        <StatusCell $w={232} $pad={42}>Sesión de usuario  [ADMIN]</StatusCell>
        <StatusCell $w={165} $pad={3}>Versión del software  [V4.3.9.0]</StatusCell>
        <StatusCell $w={366} $center>ANVIZ Global, Inc.</StatusCell>
        <StatusCell $w={261} $center>2019-10-24 jueves 07:47:49</StatusCell>
      </StatusBar>
      <Taskbar>
        <TaskSlot>
          <svg width="16" height="16" viewBox="0 0 16 16"><path d="M0 2.300 6.500 1.400v6.100H0zM7.300 1.300 16 0v7.500H7.300zM0 8.300h6.500v6.200L0 13.600zM7.300 8.300H16V16l-8.700-1.300z" fill="#f5f5f5" /></svg>
        </TaskSlot>
        <TaskSlot>
          <svg width="16" height="16" viewBox="0 0 16 16"><circle cx="8" cy="8" r="6.300" fill="none" stroke="#f1f1f1" strokeWidth="1.800" /></svg>
        </TaskSlot>
        <TaskItem $w={144} $ml={7}><Firefox />Recibidos (29) - la...</TaskItem>
        <TaskItem $w={144} $ml={8}><Firefox />Justificaciones — ...</TaskItem>
        <TaskItem $w={149} $ml={4} $gap={9} $active><Shield size={22} />CrossChex Standa...</TaskItem>
        <TaskItem $w={143} $ml={7} $gap={8}><Folder />Duda prueba 6</TaskItem>
        <TrayIcons>
          <Shield size={17} />
          <Tray kind="edge" />
          <Tray kind="onenote" />
          <Tray kind="phone" />
          <Tray kind="defender" />
          <Tray kind="usb" />
          <Tray kind="sound" />
          <Tray kind="net" />
          <Clock>7:47<br />24/10/2019</Clock>
        </TrayIcons>
        <NotifyButton>
          <svg width="17" height="16" viewBox="0 0 17 16"><path d="M.5 1h16v11H10l-2 3-2-3H.5z" fill="none" stroke="#f1f1f1" /></svg>
        </NotifyButton>
      </Taskbar>
    </Window>
  )
}
